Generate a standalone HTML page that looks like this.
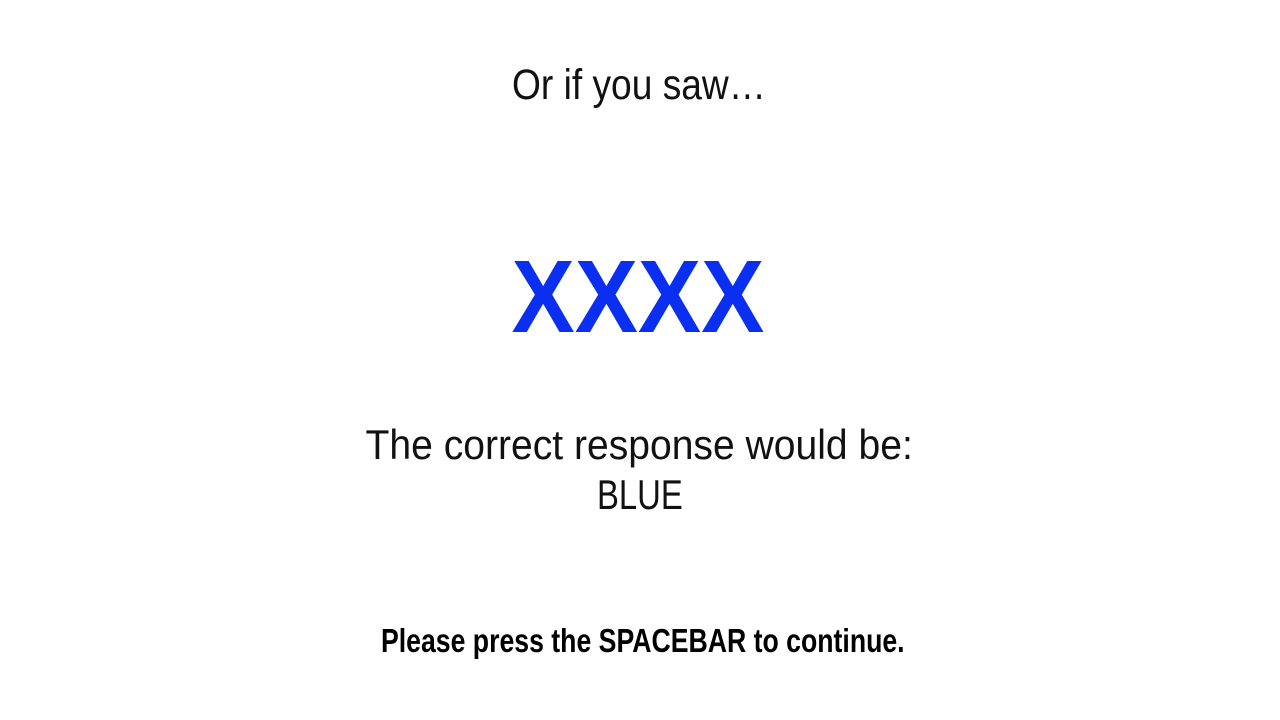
<!DOCTYPE html>
<html><head><meta charset="utf-8"><style>
html,body{margin:0;padding:0;background:#fff;width:1280px;height:720px;overflow:hidden}
.t{position:absolute;left:0;width:1280px;text-align:center;line-height:1;font-family:"Liberation Sans",sans-serif;color:#111;white-space:nowrap}
.t span{display:inline-block;transform-origin:center}
</style></head><body>
<div class="t" style="top:64px;font-size:43px"><span data-w="254" data-c="639" style="transform:scaleX(.87)">Or if you saw…</span></div>
<div class="t" style="top:245px;font-size:103px;font-weight:bold;color:#0a2ff0"><span data-w="253" data-c="638" style="transform:scaleX(.92)">XXXX</span></div>
<div class="t" style="top:424px;font-size:42px"><span data-w="547" data-c="639" style="transform:scaleX(.88)">The correct response would be:</span></div>
<div class="t" style="top:474px;font-size:42px"><span data-w="86" data-c="640" style="transform:scaleX(.88)">BLUE</span></div>
<div class="t" style="top:624px;font-size:33px;font-weight:bold;color:#000"><span data-w="524" data-c="643" style="transform:scaleX(.85)">Please press the SPACEBAR to continue.</span></div>
<script>
document.querySelectorAll('.t span').forEach(function(s){
  var w=s.offsetWidth, tw=+s.dataset.w, c=+s.dataset.c;
  var sc=tw/w;
  var cur=s.offsetLeft+w/2;
  s.style.transform='translateX('+(c-cur)+'px) scaleX('+sc+')';
});
</script>
</body></html>
